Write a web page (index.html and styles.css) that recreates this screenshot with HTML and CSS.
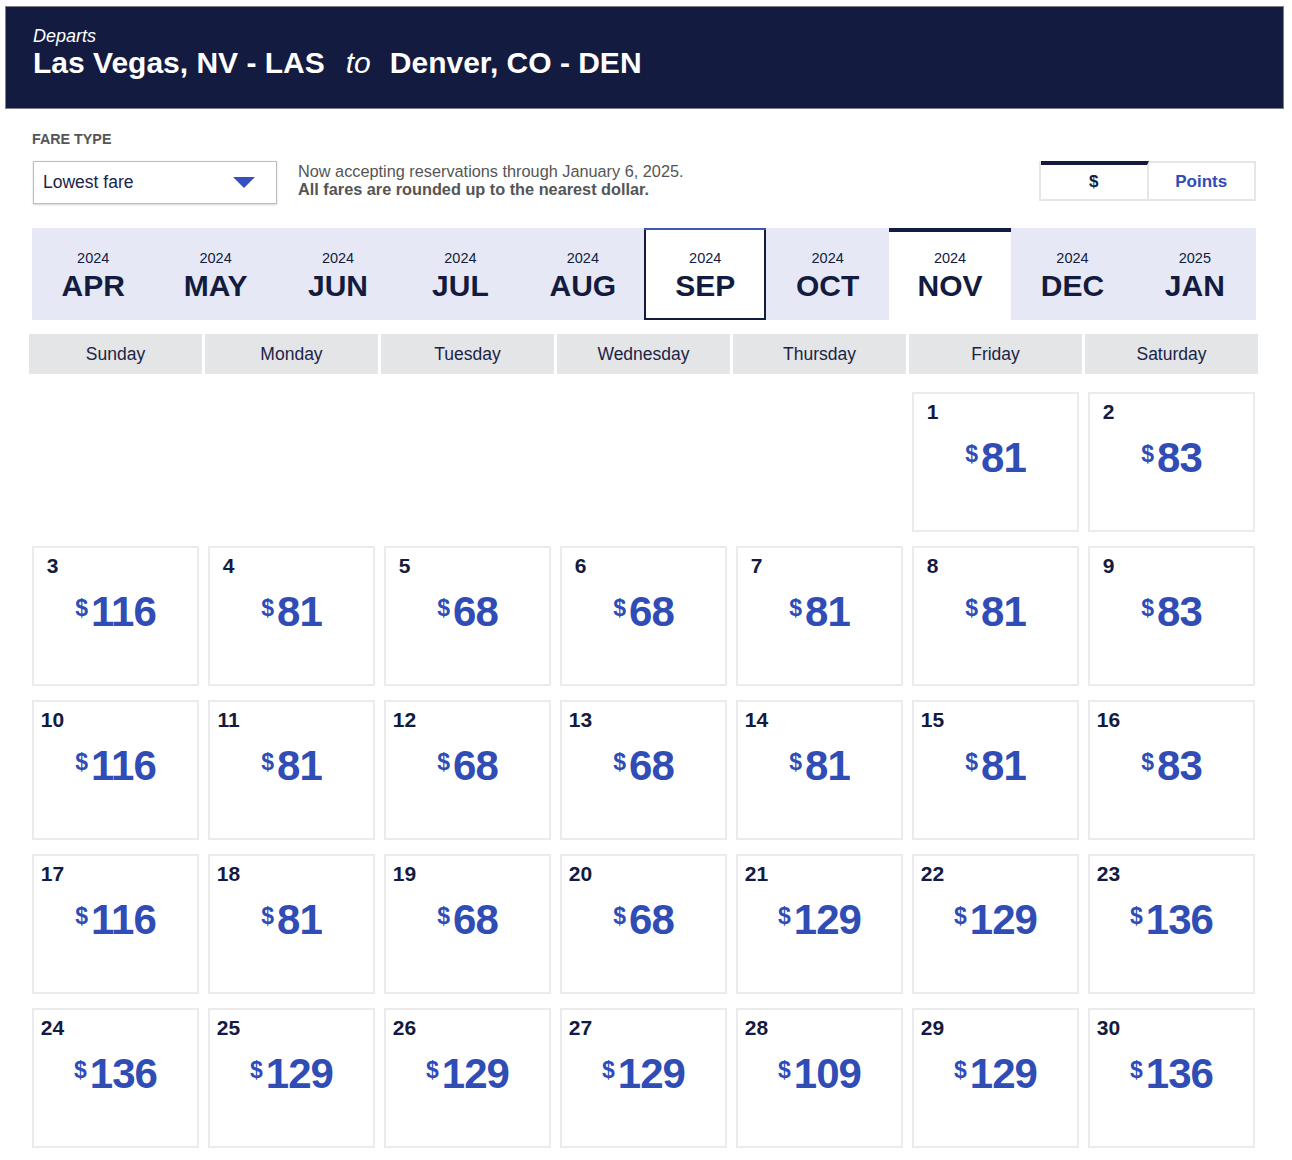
FILE: index.html
```html
<!DOCTYPE html>
<html lang="en">
<head>
<meta charset="utf-8">
<title>Low fare calendar</title>
<link rel="stylesheet" href="styles.css">
</head>
<body>
<header class="trip">
  <div class="trip-label">Departs</div>
  <h1 class="trip-route">Las Vegas, NV - LAS<span class="trip-to">to</span>Denver, CO - DEN</h1>
</header>

<main class="fares">
  <div class="fare-label">FARE TYPE</div>
  <div class="controls">
    <div class="select">
      <span>Lowest fare</span>
      <svg class="select-caret" width="22" height="11" viewBox="0 0 22 11"><path d="M0 0H22L11 11Z" fill="#3550c0"/></svg>
    </div>
    <div class="note">
      <div>Now accepting reservations through January 6, 2025.</div>
      <div class="note-strong">All fares are rounded up to the nearest dollar.</div>
    </div>
    <div class="toggle">
      <div class="toggle-opt is-on">$</div>
      <div class="toggle-opt">Points</div>
    </div>
  </div>

  <nav class="months">
    <div class="month"><span class="m-year">2024</span><span class="m-name">APR</span></div>
    <div class="month"><span class="m-year">2024</span><span class="m-name">MAY</span></div>
    <div class="month"><span class="m-year">2024</span><span class="m-name">JUN</span></div>
    <div class="month"><span class="m-year">2024</span><span class="m-name">JUL</span></div>
    <div class="month"><span class="m-year">2024</span><span class="m-name">AUG</span></div>
    <div class="month is-focus"><span class="m-year">2024</span><span class="m-name">SEP</span></div>
    <div class="month"><span class="m-year">2024</span><span class="m-name">OCT</span></div>
    <div class="month is-active"><span class="m-year">2024</span><span class="m-name">NOV</span></div>
    <div class="month"><span class="m-year">2024</span><span class="m-name">DEC</span></div>
    <div class="month"><span class="m-year">2025</span><span class="m-name">JAN</span></div>
  </nav>

  <div class="weekdays">
    <div class="wd">Sunday</div>
    <div class="wd">Monday</div>
    <div class="wd">Tuesday</div>
    <div class="wd">Wednesday</div>
    <div class="wd">Thursday</div>
    <div class="wd">Friday</div>
    <div class="wd">Saturday</div>
  </div>

  <div class="days">
    <div class="day empty"></div>
    <div class="day empty"></div>
    <div class="day empty"></div>
    <div class="day empty"></div>
    <div class="day empty"></div>
    <div class="day"><div class="d-num">1</div><div class="d-price"><span class="cur">$</span>81</div></div>
    <div class="day"><div class="d-num">2</div><div class="d-price"><span class="cur">$</span>83</div></div>

    <div class="day"><div class="d-num">3</div><div class="d-price"><span class="cur">$</span>116</div></div>
    <div class="day"><div class="d-num">4</div><div class="d-price"><span class="cur">$</span>81</div></div>
    <div class="day"><div class="d-num">5</div><div class="d-price"><span class="cur">$</span>68</div></div>
    <div class="day"><div class="d-num">6</div><div class="d-price"><span class="cur">$</span>68</div></div>
    <div class="day"><div class="d-num">7</div><div class="d-price"><span class="cur">$</span>81</div></div>
    <div class="day"><div class="d-num">8</div><div class="d-price"><span class="cur">$</span>81</div></div>
    <div class="day"><div class="d-num">9</div><div class="d-price"><span class="cur">$</span>83</div></div>

    <div class="day"><div class="d-num">10</div><div class="d-price"><span class="cur">$</span>116</div></div>
    <div class="day"><div class="d-num">11</div><div class="d-price"><span class="cur">$</span>81</div></div>
    <div class="day"><div class="d-num">12</div><div class="d-price"><span class="cur">$</span>68</div></div>
    <div class="day"><div class="d-num">13</div><div class="d-price"><span class="cur">$</span>68</div></div>
    <div class="day"><div class="d-num">14</div><div class="d-price"><span class="cur">$</span>81</div></div>
    <div class="day"><div class="d-num">15</div><div class="d-price"><span class="cur">$</span>81</div></div>
    <div class="day"><div class="d-num">16</div><div class="d-price"><span class="cur">$</span>83</div></div>

    <div class="day"><div class="d-num">17</div><div class="d-price"><span class="cur">$</span>116</div></div>
    <div class="day"><div class="d-num">18</div><div class="d-price"><span class="cur">$</span>81</div></div>
    <div class="day"><div class="d-num">19</div><div class="d-price"><span class="cur">$</span>68</div></div>
    <div class="day"><div class="d-num">20</div><div class="d-price"><span class="cur">$</span>68</div></div>
    <div class="day"><div class="d-num">21</div><div class="d-price"><span class="cur">$</span>129</div></div>
    <div class="day"><div class="d-num">22</div><div class="d-price"><span class="cur">$</span>129</div></div>
    <div class="day"><div class="d-num">23</div><div class="d-price"><span class="cur">$</span>136</div></div>

    <div class="day"><div class="d-num">24</div><div class="d-price"><span class="cur">$</span>136</div></div>
    <div class="day"><div class="d-num">25</div><div class="d-price"><span class="cur">$</span>129</div></div>
    <div class="day"><div class="d-num">26</div><div class="d-price"><span class="cur">$</span>129</div></div>
    <div class="day"><div class="d-num">27</div><div class="d-price"><span class="cur">$</span>129</div></div>
    <div class="day"><div class="d-num">28</div><div class="d-price"><span class="cur">$</span>109</div></div>
    <div class="day"><div class="d-num">29</div><div class="d-price"><span class="cur">$</span>129</div></div>
    <div class="day"><div class="d-num">30</div><div class="d-price"><span class="cur">$</span>136</div></div>
  </div>
</main>
</body>
</html>
```

FILE: styles.css
```css
* { box-sizing: border-box; }

body {
  margin: 0;
  background: #fff;
  font-family: "Liberation Sans", Arial, Helvetica, sans-serif;
  color: #131b3f;
}

/* Route banner */
.trip {
  margin: 6px 8px 0 5px;
  height: 103px;
  border: 1px solid #7f8088;
  background: #131b40;
  color: #fff;
  padding: 19px 0 0 27px;
}
.trip-label {
  font-size: 18px;
  line-height: 20px;
  font-style: italic;
}
.trip-route {
  margin: 0;
  font-size: 30px;
  line-height: 34px;
  font-weight: bold;
  white-space: nowrap;
}
.trip-to {
  font-weight: normal;
  font-style: italic;
  margin: 0 19px 0 21px;
}

/* Fare area */
.fares {
  padding: 0 36px 0 32px;
}
.fare-label {
  margin-top: 22px;
  font-size: 14.3px;
  line-height: 16px;
  font-weight: bold;
  color: #555;
}

.controls {
  display: flex;
  align-items: flex-start;
  margin-top: 14px;
}
.select {
  margin-left: 1px;
  width: 244px;
  height: 43px;
  border: 1px solid #bdbdbd;
  box-shadow: 0 1px 2px rgba(0, 0, 0, 0.18);
  display: flex;
  align-items: center;
  justify-content: space-between;
  padding: 0 21px 0 9px;
  font-size: 17.5px;
  color: #1b2346;
  background: #fff;
}
.select-caret { display: block; margin-top: -1px; }

.note {
  margin: 1px 0 0 21px;
  font-size: 16.3px;
  line-height: 18px;
  color: #555;
}
.note-strong { font-weight: bold; }

.toggle {
  margin-left: auto;
  width: 217px;
  height: 40px;
  display: flex;
  border: 2px solid #e6e6e6;
  border-top: none;
}
.toggle-opt {
  flex: 1;
  display: flex;
  align-items: center;
  justify-content: center;
  font-size: 17px;
  font-weight: bold;
  color: #304cb5;
  border-top: 2px solid #e6e6e6;
  padding-top: 2px;
}
.toggle-opt.is-on {
  color: #131b3f;
  border-top: 4px solid #131b3f;
  border-right: 2px solid #e6e6e6;
  padding-top: 0;
}

/* Month tabs */
.months {
  margin-top: 24px;
  display: flex;
  height: 92px;
  background: #e6e9f5;
}
.month {
  flex: 1;
  display: flex;
  flex-direction: column;
  align-items: center;
  padding-top: 22px;
  color: #131b3f;
}
.m-year {
  font-size: 14.5px;
  line-height: 17px;
}
.m-name {
  margin-top: 3px;
  font-size: 30px;
  line-height: 32px;
  font-weight: bold;
}
.month.is-focus {
  background: #fff;
  box-shadow: inset 0 2px 0 #3b56bf, inset 0 0 0 2px #131b3f;
}
.month.is-active {
  background: #fff;
  box-shadow: inset 0 4px 0 #131b3f;
}

/* Calendar grid */
.weekdays,
.days {
  display: grid;
  grid-template-columns: repeat(7, 173px);
  column-gap: 3px;
  margin-left: -3px;
}
.weekdays { margin-top: 14px; }
.wd {
  height: 40px;
  background: #e4e5e7;
  display: flex;
  align-items: center;
  justify-content: center;
  font-size: 17.5px;
  color: #1b2346;
}

.days {
  margin-top: 18px;
  row-gap: 14px;
}
.day {
  height: 140px;
  margin: 0 3px 0 3px;
  border: 2px solid #ebebeb;
  background: #fff;
}
.day.empty { border-color: transparent; }
.d-num {
  width: 31px;
  margin: 6px 0 0 3px;
  text-align: center;
  font-size: 21px;
  line-height: 24px;
  font-weight: bold;
  color: #131b3f;
}
.d-price {
  margin-top: 6px;
  text-align: center;
  font-size: 42px;
  line-height: 48px;
  font-weight: bold;
  letter-spacing: -1px;
  color: #304cb5;
}
.cur {
  font-size: 23px;
  vertical-align: 10px;
  letter-spacing: 0;
  margin-right: 3px;
}
```
